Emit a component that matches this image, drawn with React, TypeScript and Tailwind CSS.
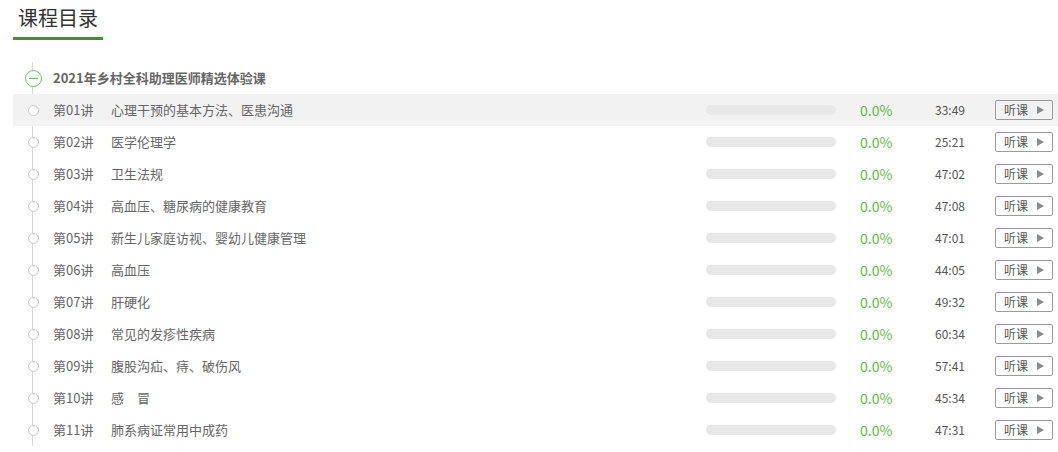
const lessons = [
  { no: "01", title: "心理干预的基本方法、医患沟通", time: "33:49" },
  { no: "02", title: "医学伦理学", time: "25:21" },
  { no: "03", title: "卫生法规", time: "47:02" },
  { no: "04", title: "高血压、糖尿病的健康教育", time: "47:08" },
  { no: "05", title: "新生儿家庭访视、婴幼儿健康管理", time: "47:01" },
  { no: "06", title: "高血压", time: "44:05" },
  { no: "07", title: "肝硬化", time: "49:32" },
  { no: "08", title: "常见的发疹性疾病", time: "60:34" },
  { no: "09", title: "腹股沟疝、痔、破伤风", time: "57:41" },
  { no: "10", title: "感\u3000冒", time: "45:34" },
  { no: "11", title: "肺系病证常用中成药", time: "47:31" },
];

const font = { fontFamily: '"Noto Sans CJK SC", "Noto Sans", sans-serif' };

const LessonRow = ({
  no,
  title,
  time,
  active,
}: {
  no: string;
  title: string;
  time: string;
  active?: boolean;
}) => (
  <li
    className={`flex items-center h-8 text-[13px] text-[#666] ${
      active ? "bg-[#f2f2f2]" : ""
    }`}
  >
    <div className="flex justify-center w-[40px] shrink-0">
      <span className="box-border bg-white border border-[#c8c8c8] rounded-full w-[11px] h-[11px]" />
    </div>
    <span className="w-[58px] shrink-0">第{no}讲</span>
    <span className="flex-1 whitespace-pre">{title}</span>
    <div className="bg-[#e8e8e8] rounded-full w-[130px] h-[10px] shrink-0" />
    <span className="pl-[24px] w-[99px] text-[#5fbb46] text-[14px] shrink-0">
      0.0%
    </span>
    <span className="w-[60px] text-[#555] text-[12px] shrink-0">{time}</span>
    <button className="flex justify-center items-center gap-[9px] mr-[5px] border border-[#9a9a9a] rounded-[2px] w-[58px] h-[20px] text-[#555] text-[12px] leading-none shrink-0">
      <span>听课</span>
      <span className="border-y-[4px] border-y-transparent border-l-[7px] border-l-[#8a8a8a] w-0 h-0" />
    </button>
  </li>
);

export default function App() {
  return (
    <div className="bg-white w-[1058px] h-[452px] overflow-hidden" style={font}>
      <div className="px-[13px]">
        <div className="inline-block pt-[3px]">
          <h1 className="px-[5px] h-[34px] text-[#333] text-[20px] leading-[30px]">
            课程目录
          </h1>
          <div className="bg-[#3a961f] w-[90px] h-[3px]" />
        </div>
      </div>
      <div className="relative mt-[22px] ml-[13px]">
        <div className="top-0 bottom-0 left-[19px] absolute bg-[#d6d6d6] w-px" />
        <div className="relative flex items-center h-8">
          <div className="flex justify-center w-[40px] shrink-0">
            <span className="flex justify-center items-center box-border bg-white border border-[#6cc35a] rounded-full w-[17px] h-[17px]">
              <span className="bg-[#6cc35a] w-[9px] h-px" />
            </span>
          </div>
          <span className="font-bold text-[#666] text-[13px]">
            2021年乡村全科助理医师精选体验课
          </span>
        </div>
        <ul className="relative">
          {lessons.map((l, i) => (
            <LessonRow key={l.no} {...l} active={i === 0} />
          ))}
        </ul>
      </div>
    </div>
  );
}
